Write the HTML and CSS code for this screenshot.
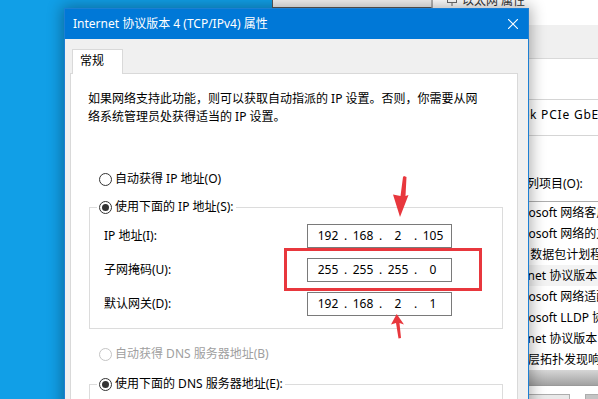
FILE: index.html
```html
<!DOCTYPE html>
<html>
	<head>
		<meta charset="UTF-8">
		<title>Internet 协议版本 4 (TCP/IPv4) 属性</title>
		<link rel="stylesheet" href="styles.css">
	</head>
	<body>
		<div class="desk">
			<!-- 后面的窗口 -->
			<div class="win-back"></div>
			<div class="win-eth">
				<div class="eth-title">
					<svg class="eth-icon" width="12" height="12" viewBox="0 0 12 12"><rect x="1.5" y="0.5" width="9" height="8" fill="none" stroke="#6d6d6d"/><path d="M4 3v3M6 3v3M8 3v3M6 9v3" stroke="#6d6d6d"/></svg>
					<span>以太网 属性</span>
				</div>
				<div class="eth-strip"></div>
				<div class="eth-page">
					<p>连接时使用:</p>
					<div class="eth-adapter">Realtek PCIe GbE Family Controller</div>
					<p class="eth-label">此连接使用下列项目(O):</p>
					<div class="eth-list">
						<div class="item">Microsoft 网络客户端</div>
						<div class="item">Microsoft 网络的文件和打印机共享</div>
						<div class="item">QoS 数据包计划程序</div>
						<div class="item inet sel">Internet 协议版本 4 (TCP/IPv4)</div>
						<div class="item">Microsoft 网络适配器多路传送器协议</div>
						<div class="item">Microsoft LLDP 协议驱动程序</div>
						<div class="item inet">Internet 协议版本 6 (TCP/IPv6)</div>
						<div class="item">链路层拓扑发现响应程序</div>
					</div>
					<div class="eth-scroll"></div>
					<div class="eth-btns">
						<span class="btn">安装(N)...</span>
						<span class="btn gray">卸载(U)</span>
					</div>
				</div>
			</div>

			<!-- 属性对话框 -->
			<div class="dlg">
				<div class="dlg-title">
					<span>Internet 协议版本 4 (TCP/IPv4) 属性</span>
					<svg class="close" width="10" height="10" viewBox="0 0 10 10"><path d="M0 0L10 10M10 0L0 10" stroke="#fff" stroke-width="1.1"/></svg>
				</div>
				<div class="dlg-body">
					<div class="tabs"><div class="tab">常规</div></div>
					<div class="page">
						<p class="intro">如果网络支持此功能，则可以获取自动指派的 IP 设置。否则，你需要从网<br>络系统管理员处获得适当的 IP 设置。</p>

						<label class="radio first"><span class="circle"></span>自动获得 IP 地址(O)</label>

						<fieldset class="group">
							<legend><label class="radio on"><span class="circle"></span>使用下面的 IP 地址(S):</label></legend>
							<div class="rows">
								<span>IP 地址(I):</span>
								<div class="ip"><span>192</span><i>.</i><span>168</span><i>.</i><span>2</span><i>.</i><span>105</span></div>
								<span>子网掩码(U):</span>
								<div class="ip"><span>255</span><i>.</i><span>255</span><i>.</i><span>255</span><i>.</i><span>0</span></div>
								<span>默认网关(D):</span>
								<div class="ip"><span>192</span><i>.</i><span>168</span><i>.</i><span>2</span><i>.</i><span>1</span></div>
							</div>
						</fieldset>

						<label class="radio off"><span class="circle"></span>自动获得 DNS 服务器地址(B)</label>

						<fieldset class="group dns">
							<legend><label class="radio on"><span class="circle"></span>使用下面的 DNS 服务器地址(E):</label></legend>
							<div class="rows">
								<span>首选 DNS 服务器(P):</span>
								<div class="ip"><span></span><i>.</i><span></span><i>.</i><span></span><i>.</i><span></span></div>
							</div>
						</fieldset>
					</div>
				</div>
			</div>

			<!-- 标注 -->
			<div class="mark-box"></div>
			<svg class="arrow-down" width="22" height="44" viewBox="0 0 22 44"><path d="M14 1L16.5 2L15.5 21L18.5 20L10 42L3 19.5L10.5 21L13 2Z" fill="#e8373d"/></svg>
			<svg class="arrow-up" width="18" height="28" viewBox="0 0 18 28"><path d="M8.7 2L16 12.5L11.5 11L13 26L10.5 26.5L8 11L3 12.5Z" fill="#e8373d"/></svg>
		</div>
	</body>
</html>
```

FILE: styles.css
```css
*{margin:0;padding:0;box-sizing:border-box;}
body{
	background:#119fe7;
	font:12px/18px "Noto Sans","Noto Sans CJK SC",sans-serif;
	color:#000;
}
.desk{
	position:relative;
	width:598px;
	height:399px;
	overflow:hidden;
}

/* 后面的窗口 */
.win-back{
	position:absolute;
	left:272px;top:-10px;
	width:160px;height:18px;
	background:#f2f2f2;
	border:1px solid #5a5a5a;
	border-right-color:#b5b5b5;
}
.win-eth{
	position:absolute;
	left:432px;top:-8px;bottom:-20px;
	width:200px;
	background:#fff;
	border-left:1px solid #b0b0b0;
}
.eth-title{
	height:33px;
	padding-left:13px;
	display:flex;
	gap:4px;
	color:#333;
}
.eth-icon{margin-top:2px;}
.eth-strip{
	height:33px;
	background:#f0f0f0;
}
.eth-page{
	border-top:1px solid #d9d9d9;
	padding:13px 0 0 13px;
}
.eth-adapter{
	margin-top:9px;
	height:37px;
	border:1px solid #d5d5d5;
	padding:6px 0 0 43px;
	white-space:nowrap;
	letter-spacing:.8px;
}
.eth-label{
	margin:39px 0 0 9px;
	white-space:nowrap;
}
.eth-list{
	margin-top:8px;
	border:1px solid #adadad;
	border-bottom:none;
	white-space:nowrap;
}
.eth-list .item{
	height:21px;
	line-height:21px;
	padding-left:57px;
	overflow:hidden;
}
.eth-list .inet{padding-left:53px;}
.eth-list .sel{background:#f3f3f3;}
.eth-scroll{
	height:16px;
	border:1px solid #9a9a9a;
	border-top:none;
	background:#bdbdbd linear-gradient(#d6d6d6,#a2a2a2);
}
.eth-btns{
	display:flex;
	gap:15px;
	margin:8px 0 0 44px;
}
.btn{
	flex:none;
	width:80px;height:23px;
	border:1px solid #adadad;
	background:#e9e9e9;
	text-align:center;
	line-height:21px;
	white-space:nowrap;
	overflow:hidden;
}
.btn.gray{background:#c4c4c4;}

/* 对话框 */
.dlg{
	position:absolute;
	left:64px;top:8px;
	width:465px;height:420px;
	background:#f0f0f0;
	border:1px solid #1c7fd3;
	box-shadow:0 0 14px 2px rgba(0,0,0,.32);
}
.dlg-title{
	height:30px;
	background:#0078d7;
	color:#fff;
	display:flex;
	align-items:center;
	justify-content:space-between;
	padding:0 10px 0 8px;
}
.dlg-body{padding-top:10px;}
.tabs{
	display:flex;
	padding-left:7px;
}
.tab{
	position:relative;
	z-index:1;
	width:51px;height:25px;
	margin-bottom:-1px;
	padding:2px 0 0 7px;
	background:#fff;
	border:1px solid #d9d9d9;
	border-bottom:none;
}
.page{
	margin-left:5px;
	width:448px;height:360px;
	background:#fff;
	border:1px solid #d9d9d9;
}
.intro{padding:16px 0 0 17px;}

.radio{
	display:flex;
	align-items:center;
	gap:3px;
	height:18px;
	white-space:nowrap;
}
.radio .circle{
	width:13px;height:13px;
	border:1px solid #333;
	border-radius:50%;
	background:#fff;
	display:flex;
	align-items:center;
	justify-content:center;
}
.radio.on .circle:after{
	content:"";
	width:7px;height:7px;
	border-radius:50%;
	background:#333;
}
.radio.first{margin:44px 0 0 28px;}
.radio.off{
	margin:16px 0 0 28px;
	color:#a0a0a0;
}
.radio.off .circle{border-color:#c4c4c4;}

.group{
	margin:10px 14px 0 18px;
	padding:0;
	border:1px solid #dcdcdc;
}
.group legend{
	margin-left:7px;
	padding:0 2px;
}
.group.dns{margin-top:12px;height:60px;}
.rows{
	display:grid;
	grid-template-columns:203px 145px;
	row-gap:10px;
	align-items:center;
	padding:8px 0 12px 14px;
}
.ip{
	height:24px;
	border:1px solid #7a7a7a;
	display:flex;
	align-items:center;
	padding-left:7px;
}
.ip span{width:26px;text-align:center;}
.ip i{width:9px;text-align:center;font-style:normal;}

/* 标注 */
.mark-box{
	position:absolute;
	left:284px;top:248px;
	width:198px;height:43px;
	border:3px solid #e8373d;
}
.arrow-down{
	position:absolute;
	left:390px;top:175px;
}
.arrow-up{
	position:absolute;
	left:388px;top:312px;
}
```
